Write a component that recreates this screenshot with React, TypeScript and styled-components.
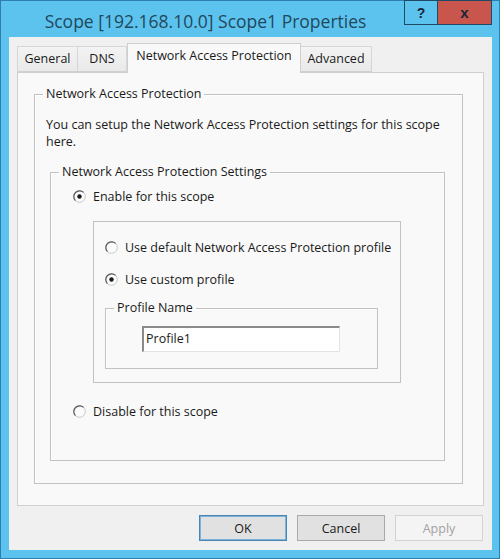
import React from "react";
import styled, { createGlobalStyle } from "styled-components";

const GlobalStyle = createGlobalStyle`
  html, body { margin: 0; padding: 0; background: #ffffff; }
  body { font-family: "Open Sans", "Noto Sans", sans-serif; color: #1a1a1a; }
`;

const Window = styled.div`
  width: 500px;
  height: 559px;
  box-sizing: border-box;
  background: #5cc3ee;
  border: 1px solid #2c7fae;
  display: flex;
  flex-direction: column;
`;

const TitleBar = styled.div`
  height: 36px;
  display: flex;
  align-items: flex-start;
`;

const Title = styled.div`
  flex: 1;
  text-align: center;
  padding: 8px 0 0 6px;
  font-size: 17.5px;
  color: #22485c;
  white-space: nowrap;
`;

const Controls = styled.div`
  display: flex;
  margin-top: -1px;
  margin-right: 7px;
`;

const CaptionButton = styled.div<{ $close?: boolean }>`
  width: ${p => (p.$close ? 54 : 34)}px;
  height: 25px;
  box-sizing: border-box;
  border: 1px solid #1d4a66;
  border-left-width: ${p => (p.$close ? 0 : 1)}px;
  background: ${p => (p.$close ? "#c9564c" : "#5cc3ee")};
  display: flex;
  align-items: center;
  justify-content: center;
  font-family: "Liberation Sans", sans-serif;
  font-weight: bold;
  font-size: ${p => (p.$close ? 15 : 14)}px;
  color: #13283a;
`;

const Client = styled.div`
  flex: 1;
  margin: 0 7px 8px 8px;
  background: #f0f0f0;
  display: flex;
  flex-direction: column;
  padding: 6px 8px 9px 8px;
  min-height: 0;
`;

const TabRow = styled.div`
  display: flex;
  align-items: flex-end;
  height: 29px;
  position: relative;
  z-index: 1;
`;

const Tab = styled.div<{ $active?: boolean; $w: number }>`
  box-sizing: border-box;
  width: ${p => p.$w}px;
  height: ${p => (p.$active ? 30 : 26)}px;
  padding-top: 3px;
  text-align: center;
  margin-bottom: ${p => (p.$active ? -1 : 0)}px;
  border: 1px solid ${p => (p.$active ? "#cfcfcf" : "#d6d6d6")};
  border-bottom: ${p => (p.$active ? "none" : "1px solid #cfcfcf")};
  border-left-width: ${p => (p.$active ? 1 : 0)}px;
  background: ${p => (p.$active ? "#f9f9f9" : "linear-gradient(#f3f3f3, #e9e9e9)")};
  font-size: 12.5px;
  white-space: nowrap;
  &:first-child { border-left-width: 1px; }
`;

const Panel = styled.div`
  flex: 1;
  border: 1px solid #cfcfcf;
  background: #f9f9f9;
  padding: 13px 19px 0 16px;
`;

const Group = styled.fieldset<{ $w: number; $h: number; $pt: number; $pl: number }>`
  box-sizing: border-box;
  width: ${p => p.$w}px;
  height: ${p => p.$h}px;
  margin: 0;
  min-width: 0;
  padding: ${p => p.$pt}px 0 0 ${p => p.$pl}px;
  border: 1px solid #c2c2c2;
  box-shadow: inset 1px 1px 0 #ffffff;
  display: flex;
  flex-direction: column;
  align-items: flex-start;

  & > legend {
    margin-left: ${p => 8 - p.$pl}px;
    padding: 0 3px;
    font-size: 12.5px;
    line-height: 16px;
  }
`;

const Box = styled.div`
  box-sizing: border-box;
  width: 308px;
  height: 162px;
  margin: 16px 0 0 20px;
  border: 1px solid #c2c2c2;
  padding: 16px 0 0 11px;
  display: flex;
  flex-direction: column;
`;

const Text = styled.p`
  margin: 0 0 0 -4px;
  font-size: 12.5px;
  line-height: 17px;
`;

const Spacer = styled.div<{ $h: number }>`
  height: ${p => p.$h}px;
  flex: none;
`;

const RadioRow = styled.label`
  display: flex;
  align-items: center;
  gap: 7px;
  height: 18px;
  font-size: 12.5px;
  white-space: nowrap;
`;

const TextBox = styled.div`
  box-sizing: border-box;
  width: 198px;
  height: 26px;
  margin-left: 26px;
  background: #ffffff;
  border: 1px solid #e3e3e3;
  border-top: 2px solid #8a8a8a;
  border-left: 2px solid #8a8a8a;
  padding: 2px 0 0 2px;
  font-size: 12.5px;
  line-height: 18px;
`;

const ButtonRow = styled.div`
  display: flex;
  justify-content: flex-end;
  gap: 10px;
  margin-top: 9px;
  padding-right: 1px;
`;

const Button = styled.div<{ $kind?: "default" | "disabled" }>`
  box-sizing: border-box;
  width: 88px;
  height: 26px;
  display: flex;
  align-items: center;
  justify-content: center;
  font-size: 12.5px;
  border: 1px solid
    ${p => (p.$kind === "default" ? "#4a86b4" : p.$kind === "disabled" ? "#d3d3d3" : "#a9a9a9")};
  background: ${p => (p.$kind === "disabled" ? "#f4f4f4" : "#e1e1e1")};
  color: ${p => (p.$kind === "disabled" ? "#a3a3a3" : "#1a1a1a")};
  box-shadow: ${p => (p.$kind === "default" ? "inset 0 0 0 1px #7fb2d8" : "none")};
`;

function Radio({ checked }: { checked?: boolean }) {
  return (
    <svg width="13" height="13" viewBox="0 0 13 13">
      <circle cx="6.5" cy="6.5" r="5.8" fill="#fbfbfb" stroke="#c8c8c8" />
      <path d="M 2.4 10.6 A 5.8 5.8 0 0 1 10.6 2.4" stroke="#5a5a5a" strokeWidth="1.2" fill="none" />
      {checked && <circle cx="6.5" cy="6.5" r="2.2" fill="#1a1a1a" />}
    </svg>
  );
}

function Option({ label, checked }: { label: string; checked?: boolean }) {
  return (
    <RadioRow>
      <Radio checked={checked} />
      {label}
    </RadioRow>
  );
}

export default function App() {
  return (
    <>
      <GlobalStyle />
      <Window>
        <TitleBar>
          <Title>Scope [192.168.10.0] Scope1 Properties</Title>
          <Controls>
            <CaptionButton>?</CaptionButton>
            <CaptionButton $close>x</CaptionButton>
          </Controls>
        </TitleBar>
        <Client>
          <TabRow>
            <Tab $w={61}>General</Tab>
            <Tab $w={49}>DNS</Tab>
            <Tab $w={174} $active>Network Access Protection</Tab>
            <Tab $w={71}>Advanced</Tab>
          </TabRow>
          <Panel>
            <Group $w={429} $h={398} $pt={14} $pl={15}>
              <legend>Network Access Protection</legend>
              <Text>
                You can setup the Network Access Protection settings for this scope
                <br />
                here.
              </Text>
              <Spacer $h={14} />
              <Group $w={395} $h={297} $pt={7} $pl={22}>
                <legend>Network Access Protection Settings</legend>
                <Option label="Enable for this scope" checked />
                <Box>
                  <Option label="Use default Network Access Protection profile" />
                  <Spacer $h={14} />
                  <Option label="Use custom profile" checked />
                  <Spacer $h={12} />
                  <Group $w={273} $h={69} $pt={10} $pl={10}>
                    <legend>Profile Name</legend>
                    <TextBox>Profile1</TextBox>
                  </Group>
                </Box>
                <Spacer $h={19} />
                <Option label="Disable for this scope" />
              </Group>
            </Group>
          </Panel>
          <ButtonRow>
            <Button $kind="default">OK</Button>
            <Button>Cancel</Button>
            <Button $kind="disabled">Apply</Button>
          </ButtonRow>
        </Client>
      </Window>
    </>
  );
}
